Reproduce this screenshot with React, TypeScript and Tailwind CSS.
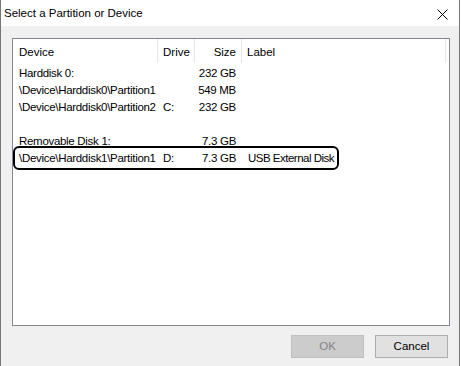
import React from "react"

interface Row {
  device: string
  drive: string
  size: string
  label: string
}

const rows: Row[] = [
  { device: "Harddisk 0:", drive: "", size: "232 GB", label: "" },
  { device: "\\Device\\Harddisk0\\Partition1", drive: "", size: "549 MB", label: "" },
  { device: "\\Device\\Harddisk0\\Partition2", drive: "C:", size: "232 GB", label: "" },
  { device: "", drive: "", size: "", label: "" },
  { device: "Removable Disk 1:", drive: "", size: "7.3 GB", label: "" },
  { device: "\\Device\\Harddisk1\\Partition1", drive: "D:", size: "7.3 GB", label: "USB External Disk" },
]

function CloseIcon() {
  return (
    <svg width="11" height="11" viewBox="0 0 11 11" className="block">
      <path d="M0.5 0.5 L10.5 10.5 M10.5 0.5 L0.5 10.5" stroke="#000" strokeWidth="1" />
    </svg>
  )
}

export default function App() {
  return (
    <div
      className="w-[461px] h-[366px] bg-white overflow-hidden text-[11.5px] text-black"
      style={{ fontFamily: '"Liberation Sans", Arial, sans-serif' }}
    >
      <div className="w-[460px] h-[366px] border-l border-r border-[#767676] flex flex-col">
        {/* title bar */}
        <div className="h-[26px] bg-white flex items-center justify-between pl-[3px] pr-[11px] pt-[2px]">
          <span className="leading-none">Select a Partition or Device</span>
          <CloseIcon />
        </div>

        {/* body */}
        <div className="flex-1 bg-[#f0f0f0] flex flex-col pt-[12px] pl-[11px] pr-[9px]">
          <div className="relative h-[288px] bg-white border border-[#828790]">
            {/* header */}
            <div className="flex h-[24px] items-center">
              <div className="w-[145px] h-full flex items-center pl-[6px] pt-[3px] border-r border-[#e5e5e5]">Device</div>
              <div className="w-[37px] h-full flex items-center pl-[5px] pt-[3px] border-r border-[#e5e5e5]">Drive</div>
              <div className="w-[47px] h-full flex items-center justify-end pr-[5px] pt-[3px] border-r border-[#e5e5e5]">Size</div>
              <div className="w-[204px] h-full flex items-center pl-[5px] pt-[3px] border-r border-[#e5e5e5]">Label</div>
            </div>

            <div className="pt-[2px]">
              {rows.map((r, i) => (
                <div key={i} className="flex h-[17px] items-center leading-none whitespace-nowrap tracking-[-0.3px]">
                  <div className="w-[145px] pl-[6px] overflow-hidden">{r.device}</div>
                  <div className="w-[37px] pl-[5px]">{r.drive}</div>
                  <div className="w-[47px] text-right pr-[6px]">{r.size}</div>
                  <div className="pl-[6px] tracking-[-0.5px]">{r.label}</div>
                </div>
              ))}
            </div>

            {/* highlight around the USB partition */}
            <div className="absolute left-[0px] top-[107px] w-[326px] h-[24px] border-2 border-black rounded-[6px]" />
          </div>

          {/* buttons */}
          <div className="flex justify-end gap-[11px] pt-[9px] pr-[2px]">
            <div className="w-[73px] h-[23px] bg-[#cccccc] border border-[#bfbfbf] text-[#838383] flex items-center justify-center">
              OK
            </div>
            <div className="w-[73px] h-[23px] bg-[#e1e1e1] border border-[#adadad] flex items-center justify-center">
              Cancel
            </div>
          </div>
        </div>
      </div>
    </div>
  )
}
